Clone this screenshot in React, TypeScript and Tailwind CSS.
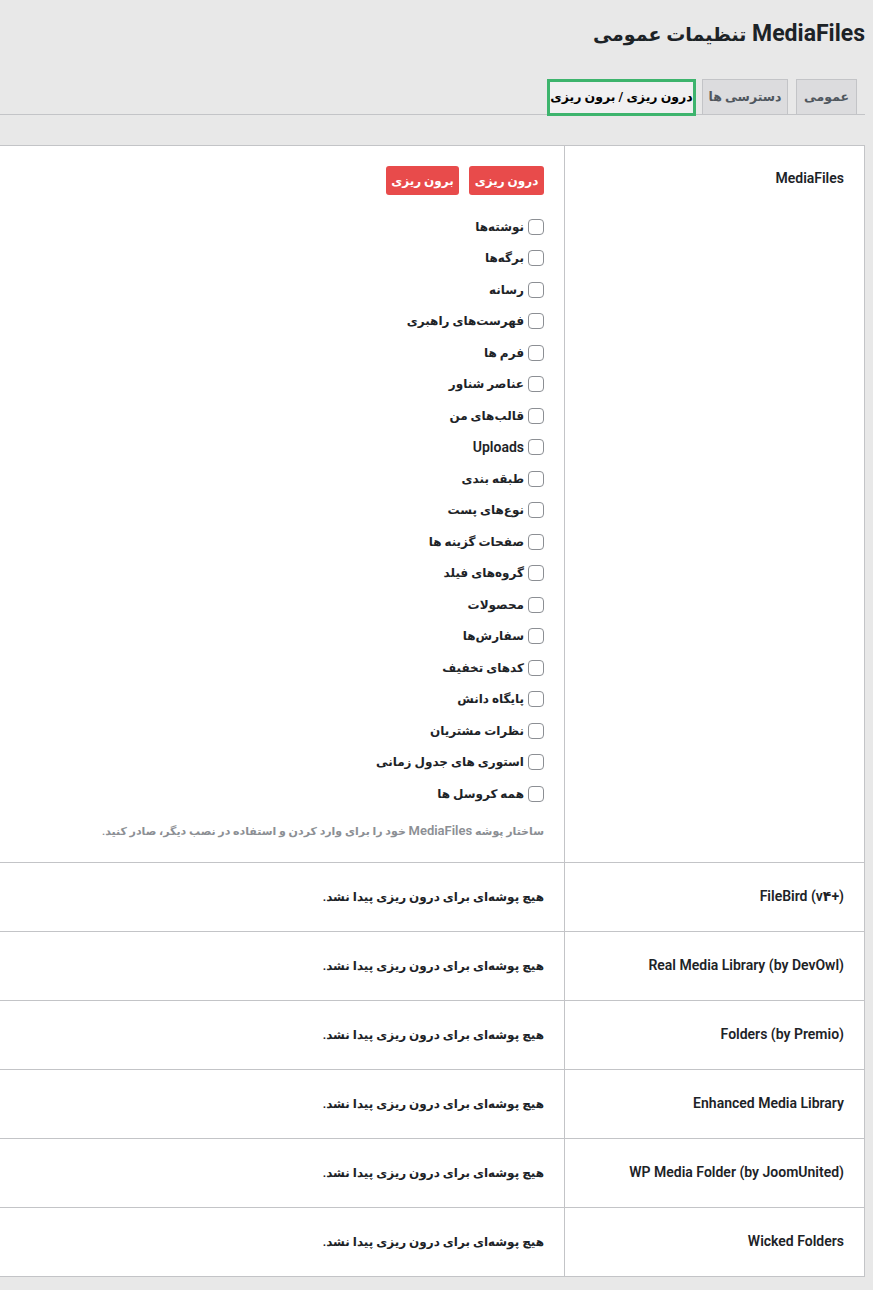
import { useState } from "react";

const postTypes = [
  "نوشته‌ها",
  "برگه‌ها",
  "رسانه",
  "فهرست‌های راهبری",
  "فرم ها",
  "عناصر شناور",
  "قالب‌های من",
  "Uploads",
  "طبقه بندی",
  "نوع‌های پست",
  "صفحات گزینه ها",
  "گروه‌های فیلد",
  "محصولات",
  "سفارش‌ها",
  "کدهای تخفیف",
  "پایگاه دانش",
  "نظرات مشتریان",
  "استوری های جدول زمانی",
  "همه کروسل ها",
];

const plugins = [
  "FileBird (v۴+)",
  "Real Media Library (by DevOwl)",
  "Folders (by Premio)",
  "Enhanced Media Library",
  "WP Media Folder (by JoomUnited)",
  "Wicked Folders",
];

const emptyText = "هیچ پوشه‌ای برای درون ریزی پیدا نشد.";

// Persian glyphs come from DejaVu Sans, which runs wider than the original font
const isLatin = (s: string) => /^[A-Za-z ]+$/.test(s);

export default function App() {
  const [checked, setChecked] = useState<Record<string, boolean>>({});

  return (
    <div
      dir="rtl"
      className="min-h-[1290px] overflow-hidden bg-[#e8e8e8] text-[#1d2327]"
      style={{ fontFamily: 'Roboto, "DejaVu Sans", sans-serif' }}
    >
      <h1 className="pr-2 pt-[19px] text-[23px] font-bold leading-[30px] text-[#1d2327]">
        MediaFiles <span className="text-[19px]">تنظیمات عمومی</span>
      </h1>

      {/* tabs */}
      <div className="mr-2 mt-[29px] flex h-[36px] items-end border-b border-[#c3c4c7] pr-2">
        <button className="h-[35px] w-[61px] whitespace-nowrap border border-b-0 border-[#c3c4c7] bg-[#dcdcde] text-[12.5px] font-semibold text-[#50575e]">
          عمومی
        </button>
        <button className="mr-2 h-[35px] w-[86px] whitespace-nowrap border border-b-0 border-[#c3c4c7] bg-[#dcdcde] text-[12.5px] font-semibold text-[#50575e]">
          دسترسی ها
        </button>
        <button className="mb-[-2px] mr-[6px] h-[37px] w-[149px] whitespace-nowrap border-[3px] border-[#3db46d] bg-[#f0f0f1] text-[12.5px] font-semibold text-black">
          درون ریزی / برون ریزی
        </button>
      </div>

      {/* settings table */}
      <div className="mr-2 mt-[30px] border border-l-0 border-[#c3c4c7] bg-white">
        <div className="flex">
          <div className="w-[300px] shrink-0 border-l border-[#c3c4c7] pr-5 pt-[22px] text-[14px] font-semibold leading-5">
            MediaFiles
          </div>
          <div className="flex-1 pb-[20px] pr-5 pt-[20px]">
            <div className="flex gap-[10px]">
              <button className="h-[29px] w-[75px] whitespace-nowrap rounded-[3px] bg-[#e84b4b] text-[12px] font-semibold text-white">
                درون ریزی
              </button>
              <button className="h-[29px] w-[73px] whitespace-nowrap rounded-[3px] bg-[#e84b4b] text-[12px] font-semibold text-white">
                برون ریزی
              </button>
            </div>
            <div className="mt-4">
              {postTypes.map((t) => (
                <label key={t} className="flex h-[31.5px] items-center gap-1 font-semibold">
                  <input
                    type="checkbox"
                    checked={!!checked[t]}
                    onChange={() => setChecked({ ...checked, [t]: !checked[t] })}
                    className="m-0 h-4 w-4 appearance-none rounded-[4px] border border-[#8c8f94] bg-white"
                  />
                  <span className={isLatin(t) ? "text-[14px]" : "text-[12px]"}>{t}</span>
                </label>
              ))}
            </div>
            <p className="mt-[11px] text-[11px] font-semibold leading-5 text-[#8c8f94]">
              ساختار پوشه <span className="text-[13px]">MediaFiles</span> خود را برای وارد کردن و استفاده در نصب دیگر، صادر کنید.
            </p>
          </div>
        </div>

        {plugins.map((p) => (
          <div key={p} className="flex h-[69px] border-t border-[#c3c4c7]">
            <div className="flex w-[300px] shrink-0 items-center border-l border-[#c3c4c7] pr-5 text-[14px] font-semibold">
              {p}
            </div>
            <div className="flex flex-1 items-center pr-5 text-[12px] font-semibold">{emptyText}</div>
          </div>
        ))}
      </div>
    </div>
  );
}
